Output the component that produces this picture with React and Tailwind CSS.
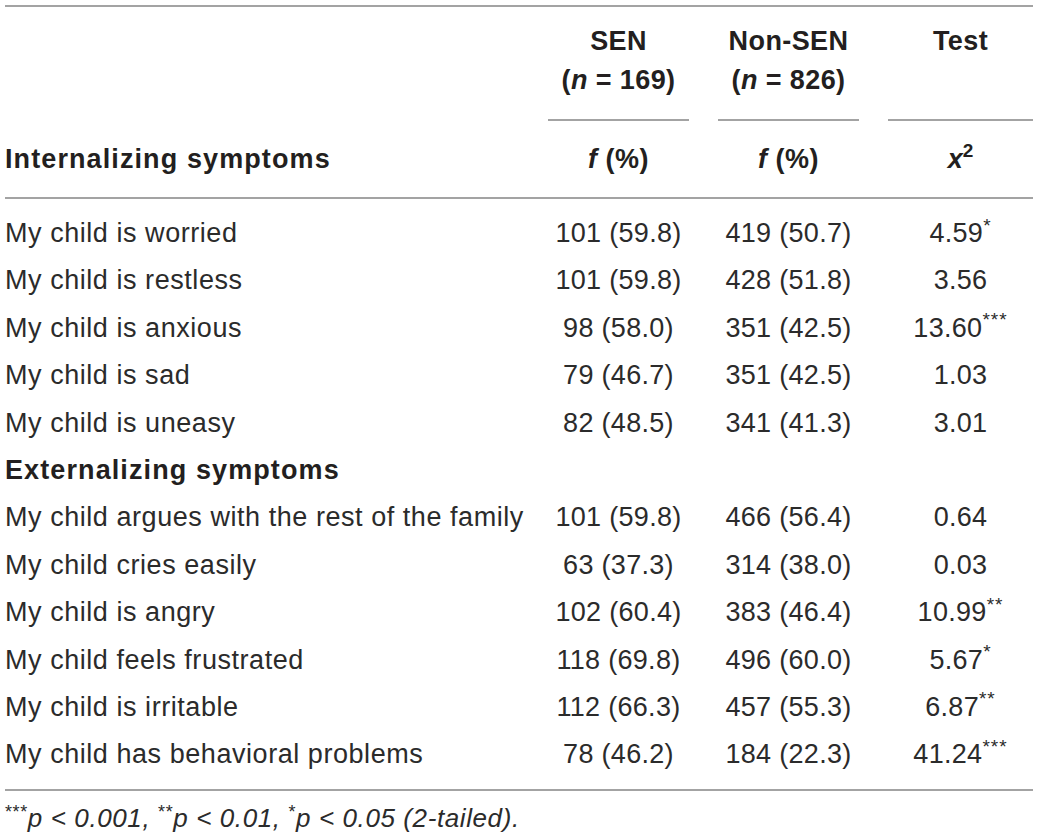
import React from "react";

const internalizing = [
  ["My child is worried", "101 (59.8)", "419 (50.7)", "4.59", "*"],
  ["My child is restless", "101 (59.8)", "428 (51.8)", "3.56", ""],
  ["My child is anxious", "98 (58.0)", "351 (42.5)", "13.60", "***"],
  ["My child is sad", "79 (46.7)", "351 (42.5)", "1.03", ""],
  ["My child is uneasy", "82 (48.5)", "341 (41.3)", "3.01", ""],
];

const externalizing = [
  ["My child argues with the rest of the family", "101 (59.8)", "466 (56.4)", "0.64", ""],
  ["My child cries easily", "63 (37.3)", "314 (38.0)", "0.03", ""],
  ["My child is angry", "102 (60.4)", "383 (46.4)", "10.99", "**"],
  ["My child feels frustrated", "118 (69.8)", "496 (60.0)", "5.67", "*"],
  ["My child is irritable", "112 (66.3)", "457 (55.3)", "6.87", "**"],
  ["My child has behavioral problems", "78 (46.2)", "184 (22.3)", "41.24", "***"],
];

const cols = "grid grid-cols-[514px_141px_141px_145px] gap-x-[29px]";

function Row({ r }) {
  return (
    <div className={`${cols} h-[47.4px] leading-[47.4px] items-center`}>
      <div className="whitespace-nowrap tracking-[0.55px]">{r[0]}</div>
      <div className="text-center whitespace-nowrap tracking-[0.3px]">{r[1]}</div>
      <div className="text-center whitespace-nowrap tracking-[0.3px]">{r[2]}</div>
      <div className="text-center whitespace-nowrap tracking-[0.3px]">
        {r[3]}
        {r[4] && <sup className="text-[19px] top-[-0.55em] tracking-[1px]">{r[4]}</sup>}
      </div>
    </div>
  );
}

export default function App() {
  return (
    <div
      className="w-[1039px] h-[838px] bg-white text-[#2b2b2b] text-[27px]"
      style={{ fontFamily: '"Liberation Sans", Arial, sans-serif' }}
    >
      <div className="ml-[5px] w-[1028px] pt-[5px]">
        <div className="border-t-2 border-[#a3a3a3]" />

        {/* header */}
        <div className={`${cols} pt-[15px] font-bold text-[#231f20] leading-[39px] tracking-[0.4px]`}>
          <div />
          <div className="text-center">
            SEN
            <br />(<i>n</i> = 169)
          </div>
          <div className="text-center">
            Non-SEN
            <br />(<i>n</i> = 826)
          </div>
          <div className="text-center">Test</div>
        </div>
        <div className={`${cols} pt-[19px]`}>
          <div />
          <div className="border-t-2 border-[#a3a3a3]" />
          <div className="border-t-2 border-[#a3a3a3]" />
          <div className="border-t-2 border-[#a3a3a3]" />
        </div>
        <div className={`${cols} pt-[15px] pb-[10px] h-[76px] font-bold text-[#231f20] leading-[47.4px]`}>
          <div className="tracking-[1.1px]">Internalizing symptoms</div>
          <div className="text-center tracking-[0.5px]">
            <i>f</i> (%)
          </div>
          <div className="text-center tracking-[0.5px]">
            <i>f</i> (%)
          </div>
          <div className="text-center">
            <i>x</i>
            <sup className="text-[19px] top-[-0.6em]">2</sup>
          </div>
        </div>
        <div className="border-t-2 border-[#a3a3a3]" />

        {/* body */}
        <div className="pt-[11px] pb-[10px]">
          {internalizing.map((r) => (
            <Row key={r[0]} r={r} />
          ))}
          <div className="h-[47.4px] leading-[47.4px] font-bold text-[#231f20] tracking-[1.1px]">
            Externalizing symptoms
          </div>
          {externalizing.map((r) => (
            <Row key={r[0]} r={r} />
          ))}
        </div>
        <div className="border-t-2 border-[#a3a3a3]" />

        <div className="italic pt-[9px] leading-[36px] text-[26px] tracking-[0.6px]">
          <sup className="text-[18px] top-[-0.5em] not-italic">***</sup>p &lt; 0.001,{" "}
          <sup className="text-[18px] top-[-0.5em] not-italic">**</sup>p &lt; 0.01,{" "}
          <sup className="text-[18px] top-[-0.5em] not-italic">*</sup>p &lt; 0.05 (2-tailed).
        </div>
      </div>
    </div>
  );
}
